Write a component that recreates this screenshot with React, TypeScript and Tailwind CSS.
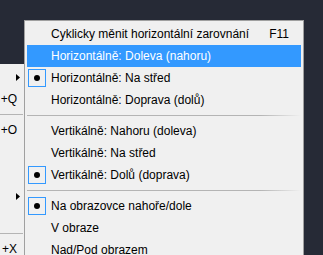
import React from 'react';

type Item =
  | { kind: 'sep' }
  | { kind: 'item'; label: string; shortcut?: string; checked?: boolean; active?: boolean };

const items: Item[] = [
  { kind: 'item', label: 'Cyklicky měnit horizontální zarovnání', shortcut: 'F11' },
  { kind: 'item', label: 'Horizontálně: Doleva (nahoru)', active: true },
  { kind: 'item', label: 'Horizontálně: Na střed', checked: true },
  { kind: 'item', label: 'Horizontálně: Doprava (dolů)' },
  { kind: 'sep' },
  { kind: 'item', label: 'Vertikálně: Nahoru (doleva)' },
  { kind: 'item', label: 'Vertikálně: Na střed' },
  { kind: 'item', label: 'Vertikálně: Dolů (doprava)', checked: true },
  { kind: 'sep' },
  { kind: 'item', label: 'Na obrazovce nahoře/dole', checked: true },
  { kind: 'item', label: 'V obraze' },
  { kind: 'item', label: 'Nad/Pod obrazem' },
];

// parent menu, mostly hidden behind the submenu
type ParentRow = { kind: 'sep' } | { kind: 'row'; text?: string; arrow?: boolean };

const parentRows: ParentRow[] = [
  { kind: 'row', arrow: true },
  { kind: 'row', text: '+Q' },
  { kind: 'sep' },
  { kind: 'row', text: '+O' },
  { kind: 'row' },
  { kind: 'row' },
  { kind: 'row', arrow: true },
  { kind: 'row' },
  { kind: 'sep' },
  { kind: 'row', text: '+X' },
];

const Arrow = () => (
  <svg width="4" height="7" viewBox="0 0 4 7" className="block">
    <polygon points="0,0 4,3.5 0,7" fill="#000" />
  </svg>
);

const Separator = () => (
  <div className="h-[9px] pt-[4px]">
    <div className="h-px bg-gradient-to-r from-[#b4b4b4] via-[#b4b4b4] via-85% to-[#f0f0f0]" />
  </div>
);

export default function App() {
  return (
    <div
      className="w-[323px] h-[255px] overflow-hidden bg-[#262a36] flex items-start text-[12px] text-black"
      style={{ fontFamily: '"Liberation Sans", Arial, sans-serif' }}
    >
      {/* parent menu */}
      <div className="mt-[64px] w-[24px] h-[200px] shrink-0 bg-[#f0f0f0] pt-[2px]">
        {parentRows.map((r, i) =>
          r.kind === 'sep' ? (
            <div key={i} className="h-[9px] pt-[4px]">
              <div className="h-px w-[23px] bg-[#b4b4b4]" />
            </div>
          ) : (
            <div
              key={i}
              className={`h-[22px] flex items-center justify-end whitespace-nowrap ${
                r.arrow ? 'pr-[4px]' : 'pr-[7px]'
              }`}
            >
              {r.arrow ? <Arrow /> : r.text}
            </div>
          )
        )}
      </div>

      {/* submenu */}
      <div className="mt-[20px] w-[280px] h-[260px] shrink-0 bg-[#f0f0f0] border border-[#a0a0a0] px-[2px] pt-[2px]">
        {items.map((it, i) =>
          it.kind === 'sep' ? (
            <Separator key={i} />
          ) : (
            <div
              key={i}
              className={`h-[22px] flex items-center pl-[1px] pr-[12px] whitespace-nowrap ${
                it.active ? 'bg-[#3399ff] text-white' : ''
              }`}
            >
              <div
                className={`w-[18px] h-[18px] flex items-center justify-center ${
                  it.checked ? 'border border-[#3399ff]' : ''
                }`}
              >
                {it.checked && <div className="w-[6px] h-[6px] rounded-full bg-black" />}
              </div>
              <span className="ml-[5px] flex-1">{it.label}</span>
              {it.shortcut && <span>{it.shortcut}</span>}
            </div>
          )
        )}
      </div>
    </div>
  );
}
